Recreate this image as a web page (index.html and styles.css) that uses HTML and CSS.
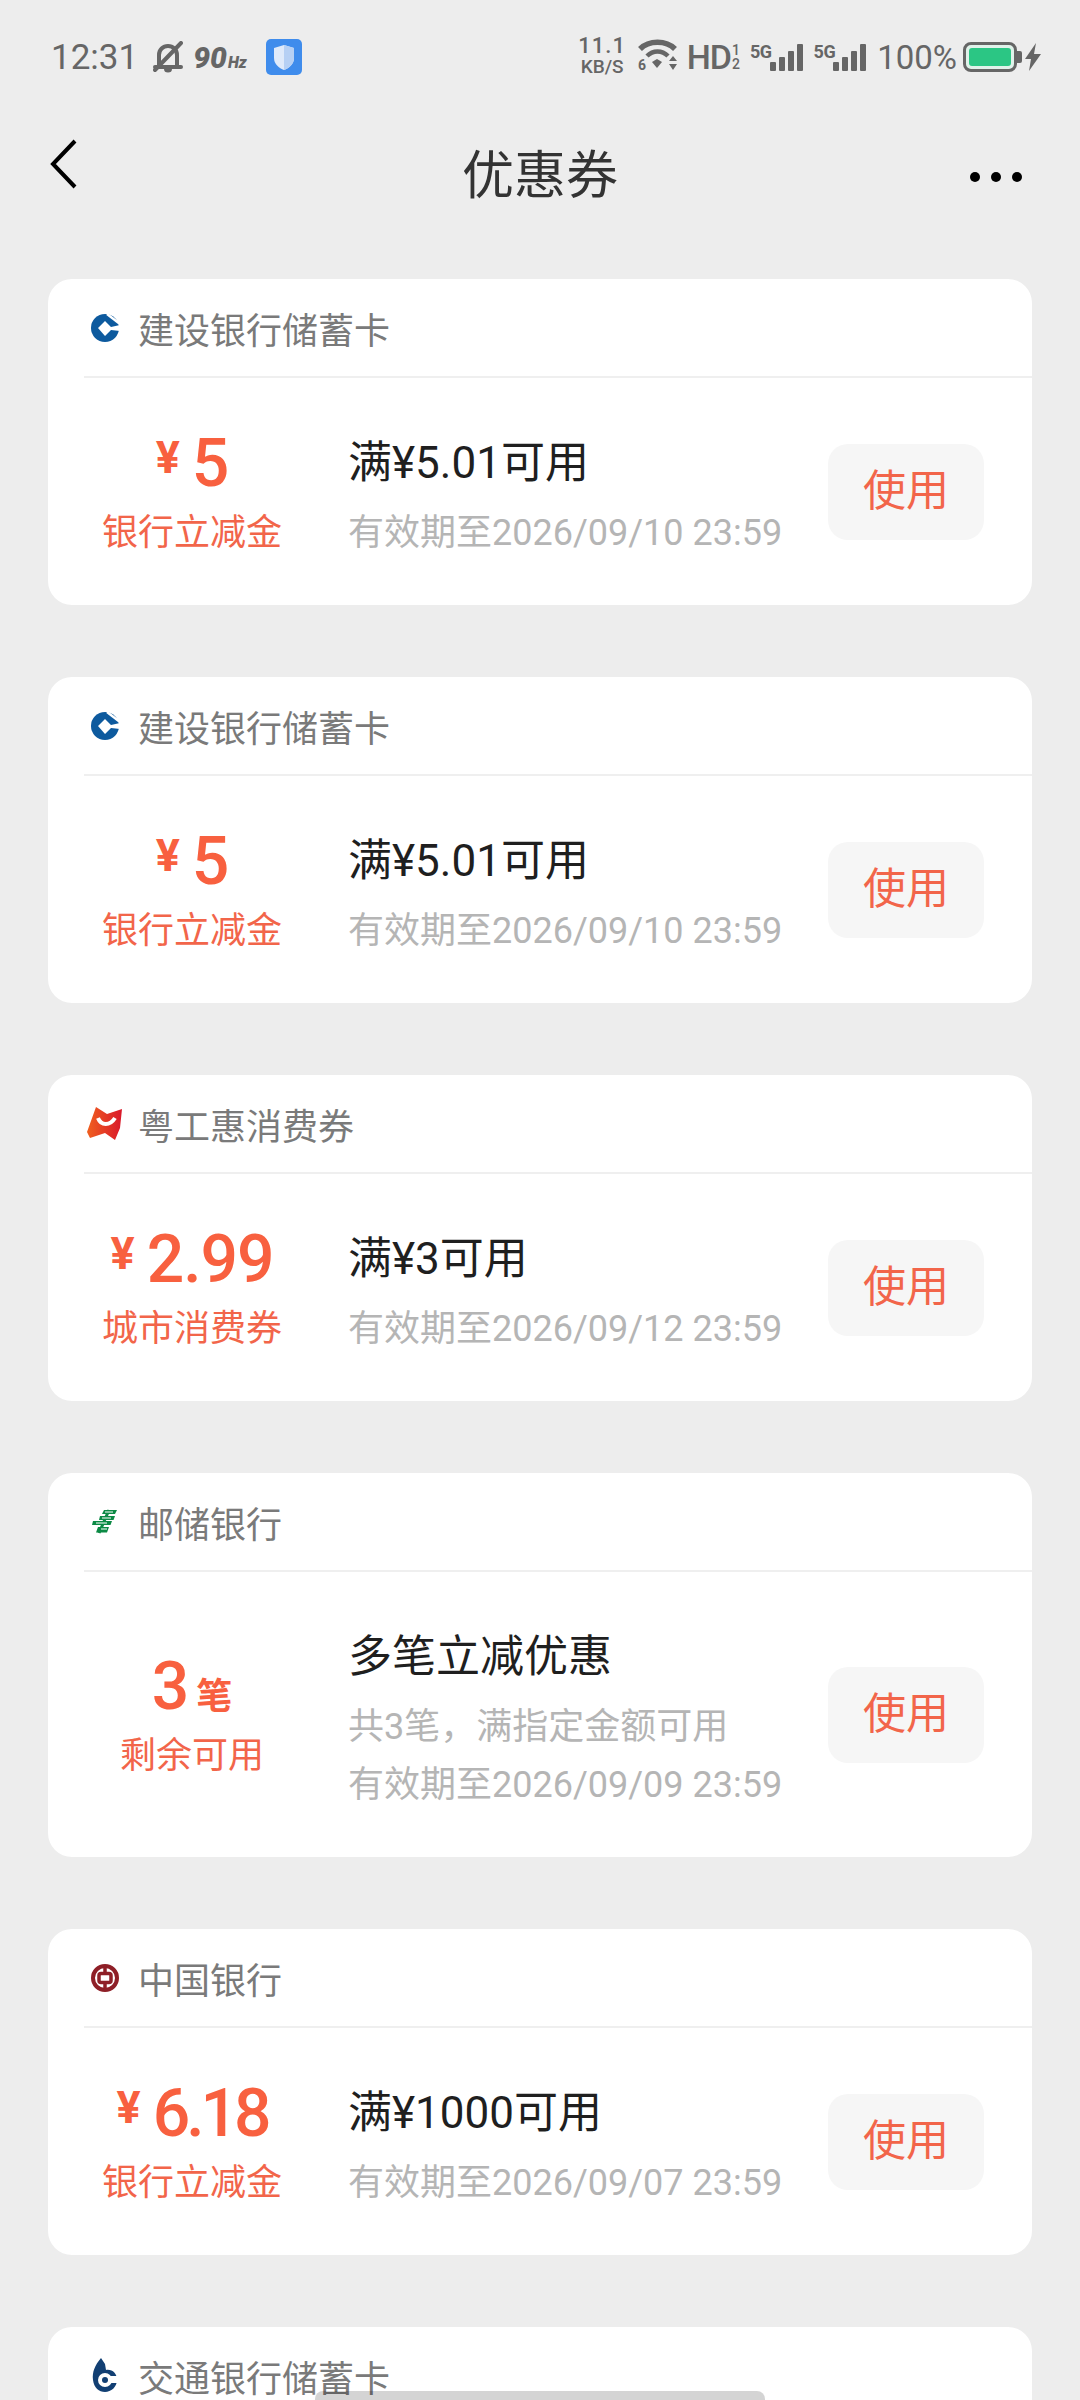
FILE: index.html
```html
<!DOCTYPE html>
<html lang="zh-CN">
<head>
    <meta charset="UTF-8">
    <meta name="viewport" content="width=device-width, initial-scale=1.0">
    <title>优惠券</title>
    <link rel="stylesheet" href="styles.css">
</head>
<body>
    <!-- Status bar -->
    <div class="status-bar">
        <div class="status-left">
            <span class="clock">12:31</span>
            <svg class="bell" width="30" height="32" viewBox="0 0 30 32">
                <path d="M6 25V14C6 8.500 10 5 15 5s9 3.500 9 9v11" fill="none" stroke="#666" stroke-width="4"/>
                <path d="M2 26h26" stroke="#666" stroke-width="4" stroke-linecap="round"/>
                <path d="M11 28h8a4 3.500 0 0 1-8 0z" fill="#666"/>
                <path d="M2 29L28 2" stroke="#666" stroke-width="4" stroke-linecap="round"/>
            </svg>
            <span class="refresh">90<small>Hz</small></span>
            <svg class="shield" width="36" height="36" viewBox="0 0 36 36">
                <rect width="36" height="36" rx="5" fill="#3f8cec"/>
                <path d="M18 6l10 3v10c0 6-5 10-10 12C13 29 8 25 8 19V9z" fill="#dfeafa"/>
                <path d="M18 6l10 3v10c0 6-5 10-10 12z" fill="#b6d0f4"/>
            </svg>
        </div>
        <div class="status-right">
            <span class="speed"><b>11.1</b><b class="speed-unit">KB/S</b></span>
            <svg class="wifi" width="39" height="36" viewBox="0 0 39 36">
                <path d="M2 10C11 1 28 1 37 10" fill="none" stroke="#666" stroke-width="5.500"/>
                <path d="M9 17c6-6 15-6 21 0" fill="none" stroke="#666" stroke-width="4.500"/>
                <path d="M14 23l5-3 5 3-5 6z" fill="#666"/>
                <path d="M31 22l4-5 4 5zM31 25l4 6 4-6z" fill="#666"/>
                <text x="0" y="31" font-family="Roboto" font-size="14" font-weight="700" fill="#666">6</text>
            </svg>
            <span class="hd">HD<span class="hd-sim"><i>1</i><i>2</i></span></span>
            <span class="signal">
                <span class="net">5G</span>
                <span class="bars"><i class="b1"></i><i class="b2"></i><i class="b3"></i><i class="b4"></i></span>
            </span>
            <span class="signal">
                <span class="net">5G</span>
                <span class="bars"><i class="b1"></i><i class="b2"></i><i class="b3"></i><i class="b4"></i></span>
            </span>
            <span class="percent">100%</span>
            <span class="battery"><span class="battery-fill"></span></span>
            <svg class="bolt" width="16" height="28" viewBox="0 0 16 28">
                <path d="M11 0L0 16h6l-2 12L16 11H9z" fill="#666"/>
            </svg>
        </div>
    </div>

    <!-- Title bar -->
    <header class="nav-bar">
        <svg class="back" width="28" height="50" viewBox="0 0 28 50">
            <path d="M25 2L3 25l22 23" fill="none" stroke="#000" stroke-width="4"/>
        </svg>
        <h1>优惠券</h1>
        <div class="more"><i></i><i></i><i></i></div>
    </header>

    <main class="coupon-list">
        <!-- 建设银行 -->
        <section class="card">
            <div class="card-head">
                <span class="logo">
                    <svg width="36" height="36" viewBox="0 0 36 36"><circle cx="18" cy="18" r="14" fill="#0d5a9e"/><path d="M11 18l7-7 6 6 9-2v6l-9-1-6 6z" fill="#fff"/><path d="M20 4l13 10" stroke="#fff" stroke-width="2.500"/></svg>
                </span>
                建设银行储蓄卡
            </div>
            <div class="card-body">
                <div class="value">
                    <div class="amount"><span class="yen">¥</span><span class="num">5</span></div>
                    <div class="value-label">银行立减金</div>
                </div>
                <div class="info">
                    <div class="info-title">满¥5.01可用</div>
                    <div class="info-sub">有效期至2026/09/10 23:59</div>
                </div>
                <button class="use-btn" type="button">使用</button>
            </div>
        </section>

        <section class="card">
            <div class="card-head">
                <span class="logo">
                    <svg width="36" height="36" viewBox="0 0 36 36"><circle cx="18" cy="18" r="14" fill="#0d5a9e"/><path d="M11 18l7-7 6 6 9-2v6l-9-1-6 6z" fill="#fff"/><path d="M20 4l13 10" stroke="#fff" stroke-width="2.500"/></svg>
                </span>
                建设银行储蓄卡
            </div>
            <div class="card-body">
                <div class="value">
                    <div class="amount"><span class="yen">¥</span><span class="num">5</span></div>
                    <div class="value-label">银行立减金</div>
                </div>
                <div class="info">
                    <div class="info-title">满¥5.01可用</div>
                    <div class="info-sub">有效期至2026/09/10 23:59</div>
                </div>
                <button class="use-btn" type="button">使用</button>
            </div>
        </section>

        <!-- 粤工惠 -->
        <section class="card">
            <div class="card-head">
                <span class="logo">
                    <svg width="36" height="36" viewBox="0 0 36 36">
                        <defs><linearGradient id="ygh" x1="0" y1="0" x2="1" y2="0"><stop offset="0" stop-color="#f0601f"/><stop offset="1" stop-color="#d9182b"/></linearGradient></defs>
                        <path d="M9 1l11 7 15-5-2 19-5 12-10-7-15 5-3-6z" fill="url(#ygh)"/>
                        <path d="M11 12c3 8 12 8 17 0" fill="none" stroke="#fff" stroke-width="4"/>
                    </svg>
                </span>
                粤工惠消费券
            </div>
            <div class="card-body">
                <div class="value">
                    <div class="amount"><span class="yen">¥</span><span class="num">2.99</span></div>
                    <div class="value-label">城市消费券</div>
                </div>
                <div class="info">
                    <div class="info-title">满¥3可用</div>
                    <div class="info-sub">有效期至2026/09/12 23:59</div>
                </div>
                <button class="use-btn" type="button">使用</button>
            </div>
        </section>

        <!-- 邮储银行 -->
        <section class="card">
            <div class="card-head">
                <span class="logo">
                    <svg width="36" height="36" viewBox="0 0 36 36">
                        <path d="M17 6h13l-2 4H15zM13 12h15l-1.500 4H12zM6 17h19l-1.500 4H5zM11 23h11l-2 5.500H9z" fill="#0c8a45"/>
                        <path d="M22 6L12 29" stroke="#0c8a45" stroke-width="3"/>
                        <path d="M18 8h8M15 14h9M9 19h11M14 25h6" stroke="#fff" stroke-width="1"/>
                    </svg>
                </span>
                邮储银行
            </div>
            <div class="card-body card-body-tall">
                <div class="value">
                    <div class="amount"><span class="num">3</span><span class="unit">笔</span></div>
                    <div class="value-label">剩余可用</div>
                </div>
                <div class="info">
                    <div class="info-title">多笔立减优惠</div>
                    <div class="info-sub">共3笔，满指定金额可用</div>
                    <div class="info-sub info-sub-next">有效期至2026/09/09 23:59</div>
                </div>
                <button class="use-btn" type="button">使用</button>
            </div>
        </section>

        <!-- 中国银行 -->
        <section class="card">
            <div class="card-head">
                <span class="logo">
                    <svg width="36" height="36" viewBox="0 0 36 36">
                        <circle cx="18" cy="18" r="12" fill="none" stroke="#8e1f27" stroke-width="4"/>
                        <rect x="12" y="13.500" width="12" height="9" rx="2" fill="none" stroke="#8e1f27" stroke-width="3.500"/>
                        <path d="M18 5v8M18 23v8" stroke="#8e1f27" stroke-width="3.500"/>
                    </svg>
                </span>
                中国银行
            </div>
            <div class="card-body">
                <div class="value">
                    <div class="amount"><span class="yen">¥</span><span class="num num-tight">6.18</span></div>
                    <div class="value-label">银行立减金</div>
                </div>
                <div class="info">
                    <div class="info-title">满¥1000可用</div>
                    <div class="info-sub">有效期至2026/09/07 23:59</div>
                </div>
                <button class="use-btn" type="button">使用</button>
            </div>
        </section>

        <!-- 交通银行, cut off by the screen edge -->
        <section class="card">
            <div class="card-head">
                <span class="logo">
                    <svg width="36" height="36" viewBox="0 0 36 36">
                        <path d="M14 0C8 7 5 14 6 22c1 8 6 12 12 12s12-5 12-12-5-11-11-10l-1-6z" fill="#123f73"/>
                        <circle cx="18" cy="22" r="7" fill="#fff"/>
                        <path d="M18 18h12v7H18z" fill="#fff"/>
                        <circle cx="18" cy="22" r="3" fill="#123f73"/>
                    </svg>
                </span>
                交通银行储蓄卡
            </div>
        </section>
    </main>

    <div class="home-bar"></div>
</body>
</html>
```

FILE: styles.css
```css
* {
    box-sizing: border-box;
}
html, body {
    margin: 0;
    padding: 0;
}
body {
    position: relative;
    height: 2400px;
    overflow: hidden;
    background-color: #ededed;
    font-family: Roboto, "Noto Sans CJK SC", sans-serif;
}

/* status bar */
.status-bar {
    height: 114px;
    padding: 0 39px 0 51px;
    display: flex;
    justify-content: space-between;
    align-items: center;
    color: #666;
}
.status-left, .status-right {
    display: flex;
    align-items: center;
}
.clock {
    font-size: 35px;
    margin-right: 15px;
}
.refresh {
    margin-left: 10px;
    font-size: 30px;
    font-weight: 900;
    font-style: italic;
    color: #666;
}
.refresh small {
    font-size: 16px;
    margin-left: 1px;
}
.shield {
    margin-left: 19px;
}
.speed {
    width: 47px;
    display: flex;
    flex-direction: column;
    align-items: center;
    font-size: 22px;
    line-height: 21px;
    margin: -3px 12px 0 0;
}
.speed b {
    font-weight: 500;
    letter-spacing: 1px;
}
.speed .speed-unit {
    font-size: 19px;
    letter-spacing: 0;
}
.hd {
    display: flex;
    align-items: center;
    font-size: 34px;
    font-weight: 500;
    margin-left: 10px;
    letter-spacing: -1px;
}
.hd-sim {
    display: flex;
    flex-direction: column;
    font-size: 14px;
    line-height: 14px;
    margin-left: 1px;
}
.hd-sim i {
    font-style: normal;
}
.signal {
    display: flex;
    align-items: flex-end;
    margin-left: 11px;
    height: 27px;
}
.net {
    font-size: 18px;
    line-height: 15px;
    font-weight: 700;
    letter-spacing: -0.5px;
    align-self: flex-start;
    margin-right: -2px;
}
.bars {
    display: flex;
    align-items: flex-end;
    gap: 3px;
}
.bars i {
    display: block;
    width: 6px;
    background-color: #666;
    border-radius: 1px;
}
.bars .b1 { height: 9px; }
.bars .b2 { height: 14px; }
.bars .b3 { height: 20px; }
.bars .b4 { height: 27px; }
.percent {
    font-size: 33px;
    margin-left: 11px;
}
.battery {
    position: relative;
    width: 54px;
    height: 30px;
    margin: 0 8px 0 6px;
    padding: 3px;
    border: 3px solid #666;
    border-radius: 8px;
    background-color: #e0f2ea;
}
.battery::after {
    content: "";
    position: absolute;
    right: -8px;
    top: 6px;
    width: 5px;
    height: 12px;
    background-color: #666;
    border-radius: 0 2px 2px 0;
}
.battery-fill {
    display: block;
    height: 100%;
    background-color: #2bc684;
    border-radius: 3px;
}

/* title bar */
.nav-bar {
    height: 120px;
    padding: 0 58px 0 50px;
    display: grid;
    grid-template-columns: 1fr auto 1fr;
    align-items: center;
}
.nav-bar h1 {
    margin: -6px 0 0 8px;
    text-align: center;
    font-size: 52px;
    font-weight: 400;
    color: #333;
}
.back {
    margin-top: -20px;
}
.more {
    justify-self: end;
    display: flex;
    gap: 10.5px;
    margin-top: 6px;
}
.more i {
    display: block;
    width: 10.5px;
    height: 10.5px;
    border-radius: 50%;
    background-color: #000;
}

/* coupons */
.coupon-list {
    padding: 45px 48px 0;
    display: flex;
    flex-direction: column;
    gap: 72px;
}
.card {
    background: white;
    border-radius: 24px;
    flex-shrink: 0;
}
.card-head {
    height: 99px;
    margin-left: 36px;
    display: flex;
    align-items: center;
    gap: 15px;
    font-size: 36px;
    color: #7a7a7a;
    border-bottom: 2px solid #efefef;
}
.logo {
    width: 36px;
    height: 36px;
    margin-left: 3px;
    display: block;
}
.logo svg {
    display: block;
}
.card-body {
    padding: 0 48px 0 36px;
    min-height: 227px;
    display: flex;
    align-items: center;
}
.card-body-tall {
    min-height: 285px;
}
.value {
    width: 216px;
    padding-top: 13px;
    text-align: center;
    flex-shrink: 0;
}
.amount {
    height: 70px;
    display: flex;
    justify-content: center;
    align-items: center;
    color: #f8603f;
}
.yen {
    font-size: 45px;
    font-weight: 700;
    margin: 0 12px 12px 0;
}
.num {
    font-size: 66px;
    font-weight: 500;
    letter-spacing: -1px;
}
.num-tight {
    letter-spacing: -4px;
}
.unit {
    font-size: 36px;
    font-weight: 700;
    margin: 14px 0 0 8px;
}
.value-label {
    font-size: 36px;
    line-height: 70px;
    color: #f2654a;
}
.info {
    flex: 1;
    margin-left: 48px;
    padding-top: 7px;
}
.info-title {
    font-size: 44px;
    line-height: 70px;
    color: #1f1f1f;
}
.info-sub {
    font-size: 36px;
    line-height: 58px;
    margin-top: 6px;
    color: #b5b5b5;
}
.info-sub-next {
    margin-top: 0;
}
.use-btn {
    width: 156px;
    height: 96px;
    padding: 0 0 10px;
    border: none;
    border-radius: 20px;
    background-color: #f6f6f6;
    color: #f2654a;
    font-family: inherit;
    font-size: 43px;
}

/* gesture bar over the last card */
.home-bar {
    position: absolute;
    left: 315px;
    bottom: 0;
    width: 450px;
    height: 9px;
    border-radius: 8px 8px 0 0;
    background-color: rgba(0, 0, 0, 0.17);
}
```
